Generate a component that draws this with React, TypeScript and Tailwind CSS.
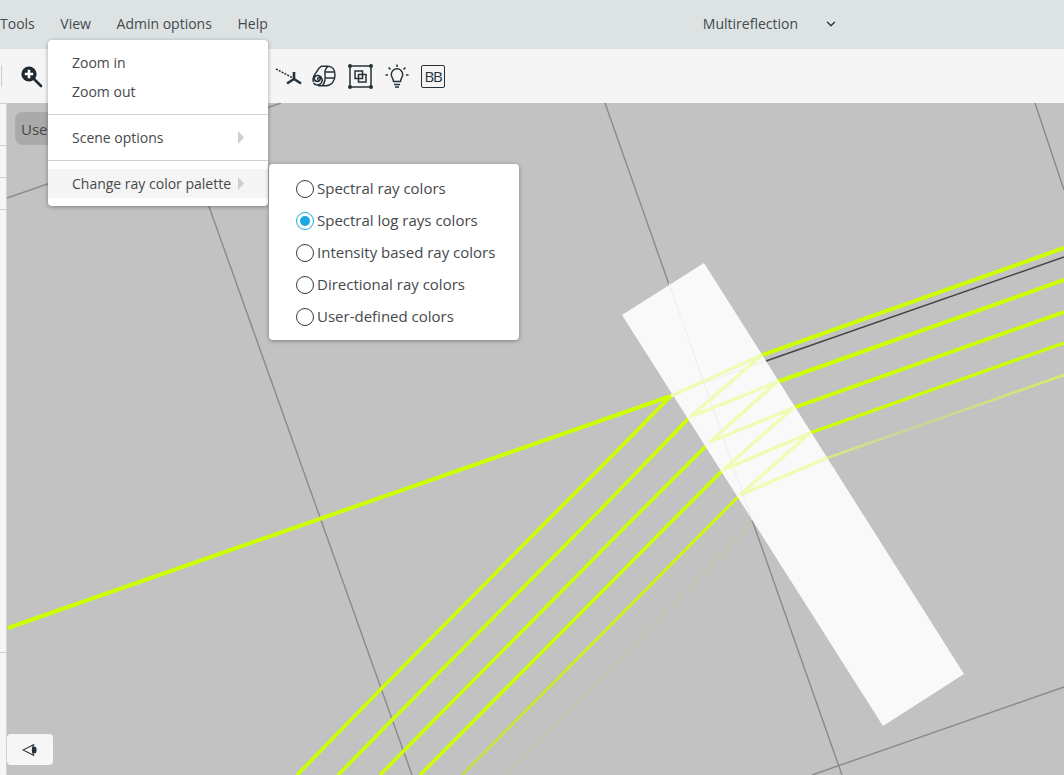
import React from "react";
import { ChevronDown } from "lucide-react";

const YELLOW = "#ccff00";
const PALE = "#eefcb4";

function Canvas() {
  return (
    <svg viewBox="7 103 1057 672" className="block h-full w-full">
      <defs>
        <linearGradient id="fadeE" gradientUnits="userSpaceOnUse" x1="827" y1="458" x2="1064" y2="375">
          <stop offset="0" stopColor="#d6ea80" />
          <stop offset="0.35" stopColor="#c9d39c" />
          <stop offset="1" stopColor="#d4ee66" />
        </linearGradient>
        <linearGradient id="fadeF" gradientUnits="userSpaceOnUse" x1="737" y1="498" x2="462" y2="775">
          <stop offset="0" stopColor="#ccff00" />
          <stop offset="0.7" stopColor="#c8ee20" />
          <stop offset="1" stopColor="#c4dc50" />
        </linearGradient>
      </defs>
      <g stroke="#8a8a8a" strokeWidth="1.4" fill="none">
        <path d="M605 103 L842 775" />
        <path d="M172 103 L412 775" />
        <path d="M1035 103 L1064 190" />
        <path d="M7 198 L281 103" />
        <path d="M812 775 L1064 687" />
      </g>
      <path d="M766 361 L1064 257" stroke="#444" strokeWidth="1.4" fill="none" />
      <g fill="none" strokeLinecap="butt">
        <path d="M8 628 L671 396" stroke={YELLOW} strokeWidth="4" />
        <path d="M762 355 L1064 248" stroke={YELLOW} strokeWidth="4" />
        <path d="M777 382 L1064 280" stroke={YELLOW} strokeWidth="4" />
        <path d="M793 408 L1064 312" stroke={YELLOW} strokeWidth="3.8" />
        <path d="M810 433 L1064 343" stroke={YELLOW} strokeWidth="3.4" />
        <path d="M827 458 L1064 375" stroke="url(#fadeE)" strokeWidth="2.6" />
        <path d="M671 396 L600 468 L548 520 L380 690 L297 775" stroke={YELLOW} strokeWidth="3.6" />
        <path d="M690 417 L600 510 L590 520 L392 720 L338 775" stroke={YELLOW} strokeWidth="3.6" />
        <path d="M708 444 L632 520 L380 775" stroke={YELLOW} strokeWidth="3.4" />
        <path d="M723 470 L673 520 L420 775" stroke={YELLOW} strokeWidth="3.4" />
        <path d="M740 495 L715 520 L462 775" stroke="url(#fadeF)" strokeWidth="2.8" />
        <path d="M752 523 L507 775" stroke="#c4c8a8" strokeWidth="1.6" />
      </g>
      <polygon points="622,315 704,263 964,674 883,726" fill="#f9f9f9" />
      <path d="M669 283 L752 520" stroke="#ececec" strokeWidth="1" fill="none" />
      <path d="M766 361 L700 384" stroke="#ececec" strokeWidth="1" fill="none" />
      <path
        d="M671 396 L762 355 L690 417 L777 382 L710 442 L793 408 L723 470 L810 433 L740 495 L827 458"
        stroke={PALE}
        strokeWidth="3.4"
        fill="none"
        strokeLinejoin="miter"
      />
    </svg>
  );
}

function ZoomIcon() {
  return (
    <svg width="24" height="24" viewBox="0 0 24 24" className="block">
      <circle cx="10" cy="10" r="7.6" fill="#1f2a30" />
      <path d="M10 5.8v8.4M5.8 10h8.4" stroke="#fff" strokeWidth="2.6" />
      <path d="M15 15l7 7" stroke="#1f2a30" strokeWidth="2.6" strokeLinecap="round" />
    </svg>
  );
}

function AxesIcon() {
  return (
    <svg width="30" height="22" viewBox="0 0 30 22" className="block" fill="none" stroke="#263238">
      <path d="M2 4 L19 13" strokeWidth="1.5" strokeDasharray="2 1.2" />
      <path d="M20 14 L20 7 M20 14 L13 18.5 M20 14 L27 18.5" strokeWidth="2.6" />
    </svg>
  );
}

function RollIcon() {
  return (
    <svg width="24" height="22" viewBox="0 0 24 22" className="block" fill="none" stroke="#263238" strokeWidth="1.5">
      <path d="M6.5 15a1.3 1.3 0 1 1 1.8-1.4a3 3 0 1 1-3.2-3.2a4.8 4.8 0 1 1-3.6 7.6" />
      <path d="M1.5 17C-0.5 12 3.5 8.5 4.5 7C5.5 5 7.5 2.5 9.5 1.2H16C20.5 1.2 23 5 23 10C23 16 19.5 20.8 14 20.8H6" />
      <path d="M16 1.2C13.5 3.5 12.5 6.5 13 9.5C13.5 13.5 13 17.5 10.5 20.5" />
      <path d="M13 7H22.5M13.5 13H22.5" />
    </svg>
  );
}

function BoxIcon() {
  return (
    <svg width="25" height="25" viewBox="0 0 25 25" className="block" fill="none" stroke="#263238" strokeWidth="1.5">
      <rect x="2" y="2" width="21" height="21" />
      <rect x="7" y="7" width="7.5" height="7.5" />
      <rect x="10.5" y="10.5" width="7.5" height="7.5" />
      <g fill="#263238" stroke="none">
        <circle cx="2" cy="2" r="2" />
        <circle cx="23" cy="2" r="2" />
        <circle cx="2" cy="23" r="2" />
        <circle cx="23" cy="23" r="2" />
      </g>
    </svg>
  );
}

function BulbIcon() {
  return (
    <svg width="24" height="25" viewBox="0 0 24 25" className="block" fill="none" stroke="#263238" strokeWidth="1.5">
      <path d="M8.5 17.5C8.5 14.5 6.3 13.5 6.3 10.5a5.7 5.7 0 0 1 11.4 0C17.7 13.5 15.5 14.5 15.5 17.5Z" />
      <path d="M9 20.5h6M10 23h4" strokeWidth="1.7" />
      <path d="M12 0.5V3M3.5 3.5L5.5 5.5M20.5 3.5L18.5 5.5M0.5 11H3M21 11H23.5" />
    </svg>
  );
}

function EyeIcon() {
  return (
    <svg width="16" height="14" viewBox="0 0 16 14" className="block" fill="none" stroke="#263238" strokeWidth="1.1">
      <path d="M12 1.5L1 7L12 12.5" />
      <path d="M12 1.5C9.8 4.5 9.8 9.5 12 12.5" />
      <ellipse cx="12.4" cy="7" rx="2.2" ry="3.6" fill="#263238" stroke="none" />
    </svg>
  );
}

function Tri() {
  return (
    <svg width="6" height="13" viewBox="0 0 6 13" className="block">
      <path d="M0 0L6 6.5L0 13Z" fill="#c9d1d1" />
    </svg>
  );
}

function Radio({ label, on }: { label: string; on?: boolean }) {
  return (
    <div className="flex h-8 items-center pl-[27px] text-[15px]">
      <span
        className={
          on
            ? "flex h-[18px] w-[18px] items-center justify-center rounded-full border border-[#1ea7e1]"
            : "flex h-[18px] w-[18px] items-center justify-center rounded-full border border-[#3a3a3a]"
        }
      >
        {on && <span className="h-[10px] w-[10px] rounded-full bg-[#1ea7e1]" />}
      </span>
      <span className="ml-[3px] pb-[2px]">{label}</span>
    </div>
  );
}

export default function App() {
  return (
    <div className="relative flex h-[775px] w-[1064px] flex-col overflow-hidden bg-[#c2c2c2] font-['Open_Sans',sans-serif] text-[14px] leading-5 text-[#44494c]">
      <header className="flex h-[49px] shrink-0 items-center gap-[25.6px] bg-[#dde3e3] pb-[2px]">
        <span>Tools</span>
        <span>View</span>
        <span>Admin options</span>
        <span>Help</span>
        <div className="ml-auto mr-[226px] flex items-center gap-[26px]">
          <span>Multireflection</span>
          <ChevronDown size={14} strokeWidth={2.2} color="#263238" />
        </div>
      </header>

      <div className="flex h-[54px] shrink-0 items-center bg-[#f5f5f5]">
        <div className="ml-[1px] h-[22px] w-px bg-[#c9cfcf]" />
        <div className="ml-[17px]">
          <ZoomIcon />
        </div>
        <div className="ml-[231px]">
          <AxesIcon />
        </div>
        <div className="ml-[8px]">
          <RollIcon />
        </div>
        <div className="ml-[12px]">
          <BoxIcon />
        </div>
        <div className="ml-[12px]">
          <BulbIcon />
        </div>
        <div className="ml-[12px] flex h-[23px] w-[24px] items-center justify-center rounded-[2px] border-[1.5px] border-[#263238] text-[15px] tracking-[-1.2px] text-[#263238]">
          BB
        </div>
      </div>

      <div className="flex min-h-0 flex-1">
        <aside className="flex w-[7px] shrink-0 flex-col border-r border-t border-[#c8d4d6] bg-[#f5f5f5]">
          <div className="h-[42px] shrink-0 border-b border-[#c8d4d6]" />
          <div className="h-[32px] shrink-0 border-b border-[#c8d4d6]" />
          <div className="h-[32px] shrink-0 border-b border-[#c8d4d6]" />
          <div className="h-[443px] shrink-0 border-b border-[#c8d4d6]" />
        </aside>
        <main className="relative min-w-0 flex-1">
          <Canvas />
          <div className="absolute left-[8px] top-[9px] flex h-[33px] w-[120px] items-center rounded-[8px] bg-[#aaaaaa] pl-[6px] text-[15px] text-[#44494c]">
            Use
          </div>
          <button className="absolute bottom-[10px] left-0 flex h-[31px] w-[46px] items-center justify-center rounded-[4px] bg-[#f6f6f6]">
            <EyeIcon />
          </button>
        </main>
      </div>

      <nav className="absolute left-[48px] top-[40px] w-[220px] rounded-[4px] bg-white py-2 shadow-[0_1px_4px_rgba(0,0,0,0.35)]">
        <div className="flex h-[29px] items-center pl-6">Zoom in</div>
        <div className="flex h-[29px] items-center pl-6">Zoom out</div>
        <div className="my-2 h-px bg-[#c8d4d6]" />
        <div className="flex h-[29px] items-center justify-between pl-6 pr-6">
          <span>Scene options</span>
          <Tri />
        </div>
        <div className="my-2 h-px bg-[#c8d4d6]" />
        <div className="flex h-[29px] items-center justify-between bg-[#f5f5f5] pl-6 pr-6">
          <span>Change ray color palette</span>
          <Tri />
        </div>
      </nav>

      <div className="absolute left-[269px] top-[164px] w-[250px] rounded-[4px] bg-white pb-[7px] pt-[9px] shadow-[0_1px_4px_rgba(0,0,0,0.35)]">
        <Radio label="Spectral ray colors" />
        <Radio label="Spectral log rays colors" on />
        <Radio label="Intensity based ray colors" />
        <Radio label="Directional ray colors" />
        <Radio label="User-defined colors" />
      </div>
    </div>
  );
}
